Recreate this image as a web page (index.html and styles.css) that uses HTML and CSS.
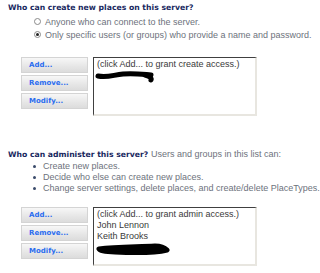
FILE: index.html
```html
<!DOCTYPE html>
<html>
<head>
<meta charset="utf-8">
<link rel="stylesheet" href="styles.css">
</head>
<body>
<section class="sec sec-create">
  <h2 class="q">Who can create new places on this server?</h2>
  <div class="radios">
    <label class="radio"><span class="rb"></span>Anyone who can connect to the server.</label>
    <label class="radio"><span class="rb on"></span>Only specific users (or groups) who provide a name and password.</label>
  </div>
  <div class="acl">
    <div class="btns">
      <button class="btn">Add...</button>
      <button class="btn">Remove...</button>
      <button class="btn">Modify...</button>
    </div>
    <div class="list">
      <div class="item">(click Add... to grant create access.)</div>
      <svg class="scrib" width="70" height="14" viewBox="0 0 70 14"><path d="M3 6 C12 8 18 5 28 4 C38 3 45 4 56 5" stroke="#000" stroke-width="5" fill="none" stroke-linecap="round"/><path d="M50 5 C54 6 57 8 56 10" stroke="#000" stroke-width="5" fill="none" stroke-linecap="round"/></svg>
    </div>
  </div>
</section>
<section class="sec sec-admin">
  <h2 class="q">Who can administer this server? <span class="note">Users and groups in this list can:</span></h2>
  <ul class="bul">
    <li>Create new places.</li>
    <li>Decide who else can create new places.</li>
    <li>Change server settings, delete places, and create/delete PlaceTypes.</li>
  </ul>
  <div class="acl">
    <div class="btns">
      <button class="btn">Add...</button>
      <button class="btn">Remove...</button>
      <button class="btn">Modify...</button>
    </div>
    <div class="list">
      <div class="item">(click Add... to grant admin access.)</div>
      <div class="item">John Lennon</div>
      <div class="item">Keith Brooks</div>
      <svg class="scrib" width="80" height="14" viewBox="0 0 80 14"><path d="M4 7 C20 5 40 5 60 4 C66 4 70 6 72 8 C60 11 40 11 20 10 C10 10 5 9 4 7 Z" stroke="#000" stroke-width="5" fill="#000" stroke-linejoin="round"/></svg>
    </div>
  </div>
</section>
</body>
</html>
```
FILE: styles.css
```css
* { box-sizing: border-box; }
body {
  margin: 0;
  width: 320px;
  height: 273px;
  background: #fff;
  font-family: "Liberation Sans", Arial, sans-serif;
  overflow: hidden;
}
.sec { display: flex; flex-direction: column; }
.sec-create { padding-top: 2px; }
.sec-admin { margin-top: 33px; }
.q {
  margin: 0 0 0 8px;
  font-family: "DejaVu Sans", Verdana, sans-serif;
  font-weight: bold;
  font-size: 7.7px;
  line-height: 11px;
  color: #17275e;
  white-space: nowrap;
}
.note {
  font-family: "Liberation Sans", Arial, sans-serif;
  font-weight: normal;
  font-size: 9px;
  color: #6d727c;
}
.radios {
  display: flex;
  flex-direction: column;
  margin: 2px 0 0 34px;
}
.radio {
  display: flex;
  align-items: center;
  height: 13px;
  font-size: 9px;
  color: #6d727c;
  white-space: nowrap;
}
.rb {
  width: 7px;
  height: 7px;
  border-radius: 50%;
  border: 1px solid #8a8a8a;
  background: #fff;
  margin-right: 4px;
  position: relative;
  flex: none;
}
.rb.on::after {
  content: "";
  position: absolute;
  left: 1px;
  top: 1px;
  width: 3px;
  height: 3px;
  border-radius: 50%;
  background: #222;
}
.acl {
  display: flex;
  margin: 16px 0 0 21px;
  gap: 5px;
}
.btns {
  display: flex;
  flex-direction: column;
  gap: 2px;
}
.btn {
  width: 67px;
  height: 16px;
  margin: 0;
  padding: 0 0 0 7px;
  text-align: left;
  border: 1px solid #d4d4d4;
  background: linear-gradient(#f7f7f7, #e6e6e6 60%, #dcdcdc);
  font-family: "DejaVu Sans", Verdana, sans-serif;
  font-weight: bold;
  font-size: 7px;
  color: #2a6cf0;
}
.list {
  width: 164px;
  height: 59px;
  border-style: solid;
  border-width: 1px 2px 2px 1px;
  border-color: #404040 #e8e6e0 #e8e6e0 #404040;
  padding: 1px 3px;
  font-size: 9px;
  line-height: 11px;
  color: #3a3a3a;
  display: flex;
  flex-direction: column;
  align-items: flex-start;
}
.item { white-space: nowrap; }
.scrib { display: block; margin-left: -2px; }
.bul {
  margin: 1px 0 0 0;
  padding: 0 0 0 43px;
  list-style: none;
  font-size: 9px;
  line-height: 11px;
  color: #6d727c;
}
.bul li { position: relative; white-space: nowrap; }
.bul li::before {
  content: "";
  position: absolute;
  left: -10px;
  top: 4px;
  width: 3px;
  height: 3px;
  border-radius: 50%;
  background: #3a4a6a;
}
.sec-admin .acl { margin-top: 13px; }
```
